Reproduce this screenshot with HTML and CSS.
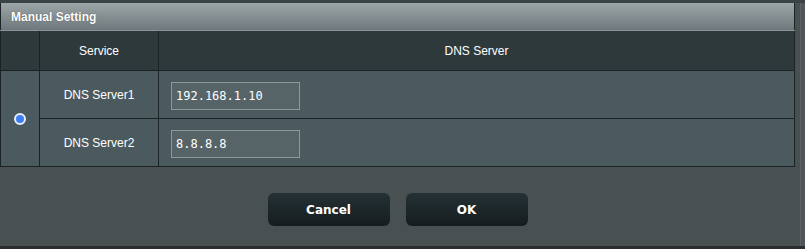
FILE: index.html
```html
<!DOCTYPE html>
<html lang="en">
  <head>
    <meta charset="UTF-8" />
    <title>Manual Setting</title>
    <link rel="stylesheet" href="styles.css">
  </head>
  <body>
    <div class="page">
      <div class="dialog">
        <!-- DNS server table -->
        <table class="dns-table">
          <tr>
            <th class="title" colspan="3">Manual Setting</th>
          </tr>
          <tr class="head">
            <td class="col-radio"></td>
            <td class="col-service">Service</td>
            <td>DNS Server</td>
          </tr>
          <tr class="row">
            <td class="col-radio" rowspan="2"><span class="radio"></span></td>
            <td class="col-service">DNS Server1</td>
            <td class="col-value"><input class="ip" type="text" value="192.168.1.10" /></td>
          </tr>
          <tr class="row">
            <td class="col-service">DNS Server2</td>
            <td class="col-value"><input class="ip" type="text" value="8.8.8.8" /></td>
          </tr>
        </table>

        <div class="actions">
          <button class="btn">Cancel</button>
          <button class="btn">OK</button>
        </div>
      </div>
      <div class="edge"></div>
    </div>
    <div class="bottom-bar"></div>
  </body>
</html>
```

FILE: styles.css
```css
body {
  margin: 0;
  background: #485052;
  font-family: "Liberation Sans", Arial, sans-serif;
  color: #fff;
}

.page {
  display: flex;
  border-top: 3px solid #3b4244;
  height: 243px;
}

.dialog {
  width: 795px;
}

.edge {
  flex: 1;
  margin-left: 5px;
  border-left: 1px solid #5a6264;
  background: #4e5658;
}

.dns-table {
  width: 795px;
  border-collapse: collapse;
  border: 1px solid #1c2325;
  border-top: none;
  font-size: 12px;
}

.dns-table td {
  border: 1px solid #1c2325;
  text-align: center;
  padding: 0;
}

.title {
  height: 27px;
  padding: 0 0 0 10px;
  text-align: left;
  font-size: 12px;
  font-weight: bold;
  text-shadow: 0 0 1px #444;
  background: linear-gradient(#9ca5a7, #6e787c);
  border-bottom: 1px solid #8a9496;
}

.head td {
  height: 39px;
  background: #2e393c;
}

.row td {
  height: 47px;
  background: #4b5a5e;
}

.col-radio {
  width: 38px;
}

.col-service {
  width: 118px;
}

.col-value {
  text-align: left !important;
  padding-left: 12px !important;
}

.radio {
  display: inline-block;
  width: 8px;
  height: 8px;
  border-radius: 50%;
  background: #3d7cf2;
  border: 2px solid #e8eef8;
  vertical-align: middle;
}

.ip {
  box-sizing: border-box;
  width: 129px;
  height: 28px;
  margin-top: 2px;
  padding: 0 4px;
  border: 1px solid #8d989a;
  background: #566468;
  color: #fff;
  font-family: "DejaVu Sans Mono", "Liberation Mono", monospace;
  font-size: 12px;
  outline: none;
}

.actions {
  display: flex;
  justify-content: center;
  gap: 16px;
  padding-top: 26px;
}

.btn {
  width: 122px;
  height: 33px;
  border: none;
  border-radius: 6px;
  background: linear-gradient(#243134, #151c1f);
  color: #fff;
  font-family: "DejaVu Sans", Verdana, sans-serif;
  font-size: 12px;
  font-weight: bold;
}

.bottom-bar {
  height: 3px;
  background: #2a2e2f;
}
```
